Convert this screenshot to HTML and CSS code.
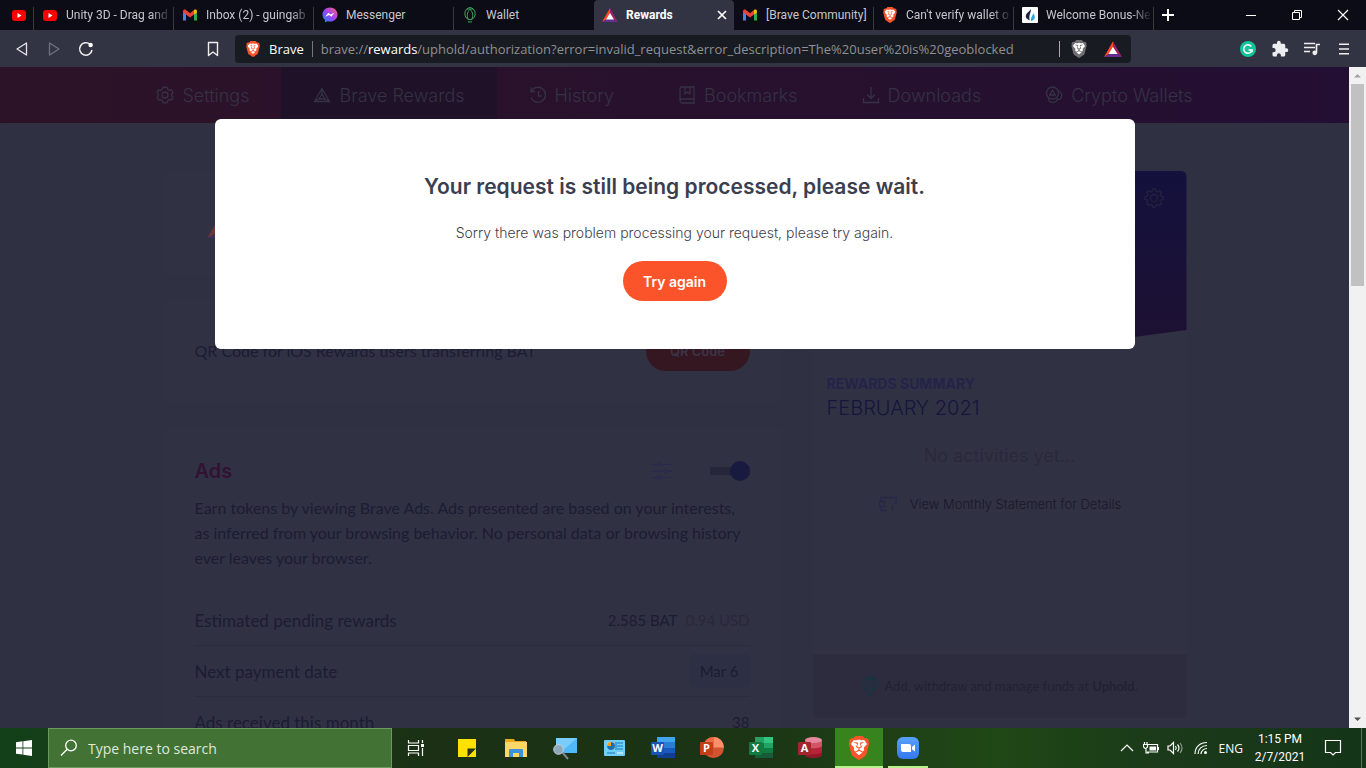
FILE: index.html
```html
<!DOCTYPE html>
<html lang="en">
<head>
<meta charset="utf-8">
<title>Rewards</title>
<link rel="stylesheet" href="styles.css">
</head>
<body>
<svg class="defs" aria-hidden="true">
  <defs>
    <linearGradient id="msg" x1="0" y1="1" x2="1" y2="0"><stop offset="0" stop-color="#0a8cff"/><stop offset=".5" stop-color="#a040f8"/><stop offset="1" stop-color="#ff6070"/></linearGradient>
    <linearGradient id="zm" x1="0" y1="0" x2="0" y2="1"><stop offset="0" stop-color="#58a0ff"/><stop offset="1" stop-color="#3478f0"/></linearGradient>
    <symbol id="yt" viewBox="0 0 16 16"><rect x="1" y="3" width="14" height="11" rx="3" fill="#f00"/><path d="M6.500 6v5l4-2.500z" fill="#fff"/></symbol>
    <symbol id="gmail" viewBox="0 0 16 16"><path d="M1 4.500V13.500h3V7z" fill="#4285f4"/><path d="M15 4.500V13.500h-3V7z" fill="#34a853"/><path d="M1 4.500C1 2.500 3 2 4 3l4 3.200L12 3v4.500l-4 3-4-3L1 5.500z" fill="#ea4335"/><path d="M12 3c1.200-1 3-.5 3 1.500V5.500l-3 2z" fill="#fbbc04"/></symbol>
    <symbol id="brave" viewBox="0 0 24 24"><path d="M4 4l8-2 8 2v8l-3 6-5 3-5-3-3-6z" fill="#fff"/><path fill="currentColor" d="M15.68 0l2.096 2.38s1.84-.512 2.709.358c.868.87 1.584 1.638 1.584 1.638l-.562 1.381.715 2.047s-2.104 7.98-2.35 8.955c-.486 1.919-.818 2.66-2.198 3.633-1.38.972-3.884 2.66-4.293 2.916-.409.256-.92.692-1.38.692-.46 0-.97-.436-1.38-.692a185.796 185.796 0 01-4.293-2.916c-1.38-.973-1.712-1.714-2.197-3.633-.247-.975-2.351-8.955-2.351-8.955l.715-2.047-.562-1.381s.716-.768 1.585-1.638c.868-.87 2.708-.358 2.708-.358L8.321 0h7.36zm-3.679 14.936c-.14 0-1.038.317-1.758.69-.72.373-1.242.637-1.409.742-.167.104-.065.301.087.409.152.107 2.194 1.69 2.393 1.866.198.175.489.464.687.464.198 0 .49-.29.688-.464.198-.175 2.24-1.759 2.392-1.866.152-.108.254-.305.087-.41-.167-.104-.689-.368-1.41-.741-.72-.373-1.617-.69-1.757-.69zm0-11.278s-.409.001-1.022.206-1.278.46-1.584.46c-.307 0-2.581-.434-2.581-.434S4.119 7.152 4.119 7.849c0 .697.339.881.68 1.243l2.02 2.149c.192.203.59.511.356 1.066-.235.555-.58 1.26-.196 1.977.384.716 1.042 1.194 1.464 1.115.421-.08 1.412-.598 1.776-.834.364-.237 1.518-1.19 1.518-1.554 0-.365-1.193-1.02-1.413-1.168-.22-.15-1.226-.725-1.247-.95-.02-.227-.012-.293.284-.851.297-.559.831-1.304.742-1.8-.089-.495-.95-.753-1.565-.986-.615-.232-1.799-.671-1.947-.74-.148-.068-.11-.133.339-.175.448-.043 1.719-.212 2.292-.052.573.16 1.552.403 1.632.532.079.13.149.134.067.579-.081.445-.5 2.581-.541 2.96-.04.38-.12.63.288.724.409.094 1.097.256 1.333.256s.924-.162 1.333-.256c.408-.093.329-.344.288-.723-.04-.38-.46-2.516-.541-2.961-.082-.445-.012-.45.067-.579.08-.129 1.059-.372 1.632-.532.573-.16 1.845.009 2.292.052.449.042.487.107.339.175-.148.069-1.332.508-1.947.74-.615.233-1.476.49-1.565.986-.09.496.445 1.241.742 1.8.297.558.304.624.284.85-.02.226-1.026.802-1.247.95-.22.15-1.413.804-1.413 1.169 0 .364 1.154 1.317 1.518 1.554.364.236 1.355.755 1.776.834.422.079 1.08-.4 1.464-1.115.384-.716.039-1.422-.195-1.977-.235-.555.163-.863.355-1.066l2.02-2.149c.341-.362.68-.546.68-1.243 0-.697-2.695-3.96-2.695-3.96s-2.274.436-2.58.436c-.307 0-.972-.256-1.585-.461-.613-.205-1.022-.206-1.022-.206z"/></symbol>
    <symbol id="bat" viewBox="0 0 16 14"><path d="M8 0L0 14l8-4.600z" fill="#ff4724"/><path d="M8 0l8 14-8-4.600z" fill="#9e1f63"/><path d="M0 14h16l-8-5z" fill="#662d91"/><path d="M8 5l-4 6.500h8z" fill="#fff"/></symbol>
    <symbol id="uphold" viewBox="0 0 16 18"><g fill="none" stroke="currentColor" stroke-width="1.100"><ellipse cx="8" cy="7.500" rx="5.800" ry="6.800"/><path d="M8 2.500C4.500 6 4.300 10 6 14M8 2.500c3.500 3.500 3.700 7.500 2 11.500M4 2.800c2-.8 3-.7 4-.3 1-.4 2-.5 4 .3M5.800 16.800h4.400"/></g></symbol>
  </defs>
</svg>

<header class="browser">
  <div class="tabs">
    <div class="tab pinned"><svg class="fav"><use href="#yt"/></svg></div>
    <div class="tab"><svg class="fav"><use href="#yt"/></svg><span class="title fade">Unity 3D - Drag and</span></div>
    <div class="tab"><svg class="fav"><use href="#gmail"/></svg><span class="title fade">Inbox (2) - guingab</span></div>
    <div class="tab"><svg class="fav" viewBox="0 0 16 16"><path d="M8 .5C3.500.5.500 3.700.500 7.700c0 2.200 1 4 2.500 5.300v2.500l2.300-1.200c4.900 1.300 10.200-1.600 10.200-6.600C15.500 3.700 12.500.5 8 .5z" fill="url(#msg)"/><path d="M3.300 9.800l3-4 2.200 1.800 3.900-1.800-3 4-2.200-1.700z" fill="#fff"/></svg><span class="title">Messenger</span></div>
    <div class="tab last"><svg class="fav green"><use href="#uphold"/></svg><span class="title">Wallet</span></div>
    <div class="tab active"><svg class="fav"><use href="#bat"/></svg><span class="title">Rewards</span><button class="icon-btn" aria-label="Close tab"><svg width="10" height="10" viewBox="0 0 10 10"><path d="M1 1l8 8M9 1L1 9" stroke="#fff" stroke-width="1.700"/></svg></button></div>
    <div class="tab"><svg class="fav"><use href="#gmail"/></svg><span class="title">[Brave Community]</span></div>
    <div class="tab"><svg class="fav brave"><use href="#brave"/></svg><span class="title fade">Can't verify wallet o</span></div>
    <div class="tab"><svg class="fav" viewBox="0 0 16 16"><rect width="16" height="16" rx="1" fill="#fff"/><path d="M8.800 1.500c.8 4-2.200 5-1.200 12C1.500 10.500 4 7 6.300 5 7.800 3.700 8.800 3 8.800 1.500z" fill="#1b2143"/><path d="M11.300 6c.2 2-3 4-2.300 8 5-.8 4.300-5 2.300-8z" fill="#2ba6df"/></svg><span class="title fade">Welcome Bonus-Ne</span></div>
    <button class="icon-btn new-tab" aria-label="New tab"><svg width="12" height="12" viewBox="0 0 12 12"><path d="M6 0v12M0 6h12" stroke="#fff" stroke-width="2"/></svg></button>
    <div class="window-controls">
      <button class="icon-btn" aria-label="Minimize"><svg width="12" height="12" viewBox="0 0 12 12"><path d="M1 6.500h10" stroke="#fff"/></svg></button>
      <button class="icon-btn" aria-label="Restore"><svg width="12" height="12" viewBox="0 0 12 12"><path d="M3.500 3V1.500h7v7H9M1.500 3.500h7v7h-7z" fill="none" stroke="#fff"/></svg></button>
      <button class="icon-btn" aria-label="Close"><svg width="12" height="12" viewBox="0 0 12 12"><path d="M1 1l10 10M11 1L1 11" stroke="#fff" stroke-width="1.200"/></svg></button>
    </div>
  </div>
  <div class="toolbar">
    <div class="tools start">
      <button class="icon-btn" aria-label="Back"><svg width="16" height="16" viewBox="0 0 16 16"><path d="M12.500 2v12L3 8z" fill="none" stroke="#e4e5ea" stroke-width="1.300" stroke-linejoin="round"/></svg></button>
      <button class="icon-btn" aria-label="Forward"><svg width="16" height="16" viewBox="0 0 16 16"><path d="M3.500 2v12L13 8z" fill="none" stroke="#70727f" stroke-width="1.300" stroke-linejoin="round"/></svg></button>
      <button class="icon-btn" aria-label="Reload"><svg width="16" height="16" viewBox="0 0 16 16"><path d="M12 3.300A6.200 6.200 0 1 0 14 9" fill="none" stroke="#eee" stroke-width="1.500"/><circle cx="12.600" cy="4" r="2.200" fill="#fff"/></svg></button>
      <button class="icon-btn bookmark" aria-label="Bookmark this tab"><svg width="14" height="16" viewBox="0 0 14 16"><path d="M2.500 1.500h9v13L7 11l-4.500 3.500z" fill="none" stroke="#eee" stroke-width="1.400" stroke-linejoin="round"/></svg></button>
    </div>
    <div class="omnibox">
      <svg class="site brave" width="16" height="16"><use href="#brave"/></svg>
      <span class="site-name">Brave</span>
      <div class="url" role="textbox" aria-label="Address" contenteditable="true" spellcheck="false">brave://<span class="host">rewards</span>/uphold/authorization?error=invalid_request&amp;error_description=The%20user%20is%20geoblocked</div>
      <span class="divider"></span>
      <button class="icon-btn shield" aria-label="Brave Shields"><svg width="18" height="18"><use href="#brave"/></svg></button>
      <button class="icon-btn" aria-label="Brave Rewards"><svg width="18" height="16"><use href="#bat"/></svg></button>
    </div>
    <div class="tools end">
      <button class="icon-btn" aria-label="Grammarly"><svg width="16" height="16" viewBox="0 0 16 16"><circle cx="8" cy="8" r="8" fill="#15c39a"/><path d="M11.300 5.500A4.200 4.200 0 1 0 12 9H8.500M12 8.500v2.800" fill="none" stroke="#fff" stroke-width="1.500"/></svg></button>
      <button class="icon-btn" aria-label="Extensions"><svg width="18" height="18" viewBox="0 0 24 24"><path d="M20.500 11H19V7a2 2 0 0 0-2-2h-4V3.500a2.500 2.500 0 0 0-5 0V5H4a2 2 0 0 0-2 2v3.800h1.500a2.700 2.700 0 0 1 0 5.400H2V20a2 2 0 0 0 2 2h3.800v-1.500a2.700 2.700 0 0 1 5.400 0V22H17a2 2 0 0 0 2-2v-4h1.500a2.500 2.500 0 0 0 0-5z" fill="#ededf0"/></svg></button>
      <button class="icon-btn" aria-label="Media"><svg width="16" height="14" viewBox="0 0 16 14"><path d="M0 1.500h11M0 5.500h11M0 9.500h6" stroke="#eee" stroke-width="1.500"/><path d="M12.500 10.500V2.500H16" fill="none" stroke="#eee" stroke-width="1.700"/><circle cx="10.800" cy="10.800" r="2.400" fill="#eee"/></svg></button>
      <button class="icon-btn" aria-label="Menu"><svg width="10" height="12" viewBox="0 0 10 12"><path d="M0 1.200h10M0 6h10M0 10.800h10" stroke="#eee" stroke-width="1.600"/></svg></button>
    </div>
  </div>
</header>

<div class="viewport">
  <div class="page">
    <nav class="nav">
      <a href="#settings"><svg viewBox="0 0 18 18"><path d="M9 1l2 .3.700 2 1.900 1.100 2-.4 1.300 2.200L15.700 8v2l1.200 1.600-1.300 2.300-2-.4-1.900 1.100-.7 2L9 17l-2-.4-.7-2-1.900-1.100-2 .4-1.300-2.300L2.300 10V8L1.100 6.200 2.400 4l2 .4 1.900-1.100.7-2z"/><circle cx="9" cy="9" r="3"/></svg>Settings</a>
      <a href="#rewards" class="current"><svg viewBox="0 0 18 18"><path d="M9 2.500L1.500 15.500h15zM9 8l-3 5h6zM9 2.500V8M1.500 15.500L6 13M16.500 15.500L12 13"/></svg>Brave Rewards</a>
      <a href="#history"><svg viewBox="0 0 18 18"><path d="M2.500 5A7.500 7.500 0 1 1 2 11.500M2 1.500V5.500h4M9.500 5v5H13"/></svg>History</a>
      <a href="#bookmarks"><svg viewBox="0 0 18 18"><path d="M4 1h12v16H4a2 2 0 0 1-2-2V3a2 2 0 0 1 2-2zM2 15a2 2 0 0 1 2-2h12M7 1v7l2.500-2L12 8V1"/></svg>Bookmarks</a>
      <a href="#downloads"><svg viewBox="0 0 18 18"><path d="M9 1v11M5 8.500L9 12.500l4-4M1.500 12v4.500h15V12"/></svg>Downloads</a>
      <a href="#wallets"><svg viewBox="0 0 18 18"><circle cx="7.500" cy="7" r="6"/><path d="M7.500 4l-2.700 5h5.400zM13 4.500c4 1.500 5 6 2 8.500-1 .8-2 1-3.500 1M3.500 12c0 6 8 6 9 0"/></svg>Crypto Wallets</a>
    </nav>
    <main class="columns">
      <div class="col-main">
        <section class="card banner"><svg width="34" height="29"><use href="#bat"/></svg></section>
        <section class="card banner qr"><span>QR Code for iOS Rewards users transferring BAT</span><button class="pill dim">QR Code</button></section>
        <section class="card ads">
          <div class="ads-head">
            <h2>Ads</h2>
            <button class="icon-btn sliders" aria-label="Ads settings"><svg width="20" height="20" viewBox="0 0 20 20"><path d="M0 3.500h5M9 3.500h11M0 10h12M16 10h4M0 16.500h5M9 16.500h11"/><circle cx="7" cy="3.500" r="1.800"/><circle cx="14" cy="10" r="1.800"/><circle cx="7" cy="16.500" r="1.800"/></svg></button>
            <input class="switch" type="checkbox" role="switch" aria-label="Ads" checked>
          </div>
          <p class="desc">Earn tokens by viewing Brave Ads. Ads presented are based on your interests, as inferred from your browsing behavior. No personal data or browsing history ever leaves your browser.</p>
          <dl class="rows">
            <div><dt>Estimated pending rewards</dt><dd>2.585 BAT<span class="usd">0.94 USD</span></dd></div>
            <div><dt>Next payment date</dt><dd><span class="chip">Mar 6</span></dd></div>
            <div><dt>Ads received this month</dt><dd>38</dd></div>
          </dl>
        </section>
      </div>
      <aside class="card wallet">
        <div class="wallet-top"><button class="icon-btn" aria-label="Wallet settings"><svg width="20" height="20" viewBox="0 0 20 20"><path d="M8.500 1h3l.4 2.300 1.600.7 2-1.400 2 2-1.400 2 .7 1.600 2.300.4v3l-2.300.4-.7 1.600 1.400 2-2 2-2-1.400-1.600.7-.4 2.200h-3l-.4-2.200-1.600-.7-2 1.400-2-2 1.400-2-.7-1.600L1 11.500v-3l2.200-.4.7-1.600-1.400-2 2-2 2 1.400 1.600-.7z"/><circle cx="10" cy="10" r="3.500"/></svg></button></div>
        <div class="summary">
          <h3>REWARDS SUMMARY</h3>
          <div class="month">FEBRUARY 2021</div>
          <p class="empty">No activities yet…</p>
          <a class="statement" href="#statement"><svg width="20" height="16" viewBox="0 0 20 16"><path d="M3 5V1.500h15V9M3 11v3.500h6M1.500 5.500h5v5h-5zM14.500 9v6"/></svg>View Monthly Statement for Details</a>
        </div>
        <div class="wallet-foot"><svg width="18" height="24"><use href="#uphold"/></svg><span>Add, withdraw and manage funds at <b>Uphold</b>.</span></div>
      </aside>
    </main>
    <div class="dialog" role="dialog" aria-labelledby="dialog-title">
      <h1 id="dialog-title">Your request is still being processed, please wait.</h1>
      <p>Sorry there was problem processing your request, please try again.</p>
      <button class="pill">Try again</button>
    </div>
  </div>
  <div class="scrollbar" aria-hidden="true">
    <svg width="17" height="17" viewBox="0 0 17 17"><path d="M5 10.500h7L8.500 7z" fill="#a3a3a3"/></svg>
    <div class="thumb"></div>
    <svg width="17" height="17" viewBox="0 0 17 17"><path d="M5 6.500h7L8.500 10z" fill="#505050"/></svg>
  </div>
</div>

<footer class="taskbar">
  <button class="icon-btn start-btn" aria-label="Start"><svg width="16" height="16" viewBox="0 0 16 16"><path d="M0 2.200l6.500-.9v6.200H0zM7.300 1.200L16 0v7.500H7.300zM0 8.400h6.500v6.200L0 13.700zM7.300 8.400H16V16l-8.700-1.200z" fill="#fff"/></svg></button>
  <label class="search"><svg width="18" height="18" viewBox="0 0 18 18"><circle cx="11" cy="6.500" r="5.300"/><path d="M7.200 10.300L1 16.500"/></svg><input type="text" placeholder="Type here to search" aria-label="Type here to search"></label>
  <div class="apps">
    <button class="icon-btn task-view" aria-label="Task View"><svg width="24" height="24" viewBox="0 0 24 24"><g fill="none" stroke="#fff" stroke-width="1.200"><path d="M4.500 4v3h10V4M4.500 20v-3h10v3M4.500 9.500h10v5h-10zM18.500 4v3M18.500 12v8"/></g><path d="M17 8h3v3h-3z" fill="#fff"/></svg></button>
    <button class="icon-btn" aria-label="Sticky Notes"><svg width="24" height="24" viewBox="0 0 24 24"><path d="M3 3h18v18H3z" fill="#ffe100"/><path d="M12.500 12.500H21L12.500 21z" fill="#26321a"/></svg></button>
    <button class="icon-btn" aria-label="File Explorer"><svg width="24" height="24" viewBox="0 0 24 24"><path d="M1 3h9l1 2h11v15H1z" fill="#e9a820"/><path d="M1 6h22v15H1z" fill="#ffd766"/><path d="M5 21v-7q0-1 1-1h12q1 0 1 1v7h-4v-4H9v4z" fill="#3b93dc"/></svg></button>
    <button class="icon-btn" aria-label="Remote desktop"><svg width="26" height="24" viewBox="0 0 26 24"><path d="M4 2h21v15H4z" fill="#4fbaf7"/><path d="M4 2h21L8 17H4z" fill="#7accfb"/><path d="M10 16l6 7" stroke="#7d8790" stroke-width="2"/><circle cx="6.500" cy="13.500" r="4.800" fill="#8ba9bb" stroke="#c4d1d8"/></svg></button>
    <button class="icon-btn" aria-label="Control Panel"><svg width="24" height="24" viewBox="0 0 24 24"><rect x="2" y="4" width="21" height="16" rx="1" fill="#70cff8"/><circle cx="9" cy="10" r="4" fill="#fff"/><path d="M9 10V6a4 4 0 1 1-4 4z" fill="#1473b5"/><path d="M9 10V6a4 4 0 0 0-4 4z" fill="#f49c22"/><path d="M15 7h6M15 10h6M15 13h6M14 6v8M5 17h8" stroke="#157ab9"/><path d="M15 17h6" stroke="#fff"/></svg></button>
    <button class="icon-btn" aria-label="Word"><svg width="26" height="24" viewBox="0 0 26 24"><path d="M7 1h18v6H7z" fill="#41a5ee"/><path d="M7 6h18v6H7z" fill="#2b7cd3"/><path d="M7 12h18v5H7z" fill="#185abd"/><path d="M7 17h18v5H7z" fill="#103f91"/><rect x="1" y="6" width="13" height="13" rx="1" fill="#1754b3"/><text x="7.500" y="16">W</text></svg></button>
    <button class="icon-btn" aria-label="PowerPoint"><svg width="26" height="24" viewBox="0 0 26 24"><circle cx="14.500" cy="11.500" r="10.500" fill="#d35230"/><path d="M14.500 1A10.500 10.500 0 0 1 25 11.500H14.500z" fill="#ff8f6b"/><path d="M14.500 1v10.500H4A10.500 10.500 0 0 1 14.500 1z" fill="#ed6c47"/><rect x="1" y="6" width="13" height="13" rx="1" fill="#c43e1c"/><text x="7.500" y="16">P</text></svg></button>
    <button class="icon-btn" aria-label="Excel"><svg width="26" height="24" viewBox="0 0 26 24"><path d="M7 1h18v21H7z" fill="#107c41"/><path d="M7 1h9v6H7z" fill="#21a366"/><path d="M16 1h9v6h-9z" fill="#33c481"/><path d="M16 7h9v5h-9z" fill="#21a366"/><path d="M7 17h18v5H7z" fill="#185c37"/><rect x="1" y="6" width="13" height="13" rx="1" fill="#107c41"/><text x="7.500" y="16">X</text></svg></button>
    <button class="icon-btn" aria-label="Access"><svg width="26" height="24" viewBox="0 0 26 24"><path d="M8 4v15c0 4 17 4 17 0V4z" fill="#94182b"/><path d="M8 4v12c2 3 15 3 17 0V4z" fill="#b52537"/><path d="M8 4v6c2 3 15 3 17 0V4z" fill="#d15567"/><ellipse cx="16.500" cy="4" rx="8.500" ry="3" fill="#e687a0"/><rect x="1" y="6" width="13" height="13" rx="1" fill="#a4262c"/><text x="7.500" y="16">A</text></svg></button>
    <button class="icon-btn running focused brave" aria-label="Brave"><svg width="24" height="24"><use href="#brave"/></svg></button>
    <button class="icon-btn running" aria-label="Zoom"><svg width="24" height="24" viewBox="0 0 24 24"><rect x="1" y="1" width="22" height="22" rx="6" fill="url(#zm)"/><path d="M5 8h8q2 0 2 2v6H7q-2 0-2-2zM16 11l3-2.500v7L16 13.500z" fill="#fff"/></svg></button>
  </div>
  <div class="tray">
    <button class="icon-btn" aria-label="Show hidden icons"><svg width="14" height="14" viewBox="0 0 14 14"><path d="M1 10l6-6 6 6"/></svg></button>
    <button class="icon-btn" aria-label="Battery"><svg width="16" height="14" viewBox="0 0 16 14"><path d="M5 3.500h9.500v7.500H4M3 8v4h3M1.500 1v2M4 1v2M.500 3.500h4v2.500L3 7.500H2L.500 6zM15.500 6v3"/><path d="M6.500 5.500h6.500v4H6.500z" fill="#fff" stroke="none"/></svg></button>
    <button class="icon-btn" aria-label="Volume"><svg width="16" height="14" viewBox="0 0 16 14"><path d="M1 5h2l3.500-3.500v11L3 9H1zM8.500 5q1.500 2 0 4M10.500 3.500q3 3.500 0 7"/><path d="M13 2q4 5 0 10" opacity=".5"/></svg></button>
    <button class="icon-btn wifi" aria-label="Network"><svg width="14" height="14" viewBox="0 0 14 14"><path d="M1 13C1 6 6 1.500 13 1.500M4 13c0-5 4-8.500 9-8.500M7 13c0-3 3-5.500 6-5.500"/><circle cx="11.500" cy="11.500" r="1.500" fill="#fff" stroke="none"/></svg></button>
    <span class="lang">ENG</span>
    <div class="clock"><span>1:15 PM</span><span>2/7/2021</span></div>
    <button class="icon-btn notif" aria-label="Notifications"><svg width="18" height="18" viewBox="0 0 18 18"><path d="M1.500 1.500h15v12h-5L9 16l-2.500-2.500h-5z"/></svg></button>
  </div>
</footer>
</body>
</html>
```
FILE: styles.css
```css
* { box-sizing: border-box; }
body {
  margin: 0;
  height: 100vh;
  display: flex;
  flex-direction: column;
  overflow: hidden;
  background: #2f3041;
  font-family: "Open Sans", "Noto Sans", sans-serif;
}
h1, h2, h3, p, dl, dd { margin: 0; }
button { font: inherit; cursor: pointer; }
svg { flex: none; display: block; }
.defs { position: absolute; width: 0; height: 0; }
.icon-btn {
  display: flex;
  align-items: center;
  justify-content: center;
  flex: none;
  padding: 0;
  border: 0;
  background: none;
}
.brave { color: #fb542b; }

/* Tab strip */
.tabs { display: flex; height: 30px; background: #0b0c16; }
.tab {
  display: flex;
  align-items: center;
  flex: 0 1 140px;
  min-width: 0;
  gap: 8px;
  padding: 0 2px 0 8px;
  color: #c6c7cc;
  font-family: Roboto, "Open Sans", sans-serif;
  font-size: 12px;
  background: linear-gradient(#3a3a3a, #3a3a3a) right bottom / 1px 23px no-repeat;
}
.tab.pinned { flex: none; width: 34px; padding: 0 8px 0 11px; }
.tab.last { background: none; }
.fav { width: 16px; height: 16px; }
.green { color: #3fa85c; }
.title { flex: 1; min-width: 0; white-space: nowrap; }
.fade { -webkit-mask-image: linear-gradient(90deg, #000 80%, transparent); mask-image: linear-gradient(90deg, #000 80%, transparent); }
.tab.active {
  padding-right: 7px;
  background: #323443;
  border-radius: 4px 4px 0 0;
  color: #fff;
  font-weight: 700;
}
.new-tab { width: 28px; }
.window-controls { display: flex; margin-left: auto; }
.window-controls .icon-btn { width: 46px; }

/* Toolbar */
.toolbar { display: flex; align-items: center; height: 37px; background: #323443; }
.tools { display: flex; width: 235px; flex: none; }
.tools .icon-btn { width: 32px; height: 28px; }
.start { padding: 0 6px; }
.end { padding: 0 6px; justify-content: flex-end; }
.bookmark { margin-left: auto; }
.omnibox {
  display: flex;
  align-items: center;
  flex: 1;
  min-width: 0;
  height: 28px;
  padding: 0 9px 0 10px;
  border-radius: 4px;
  background: #181b22;
  font-size: 13px;
  color: #fff;
}
.site { margin-right: 8px; }
.site-name { padding-right: 8px; border-right: 1px solid #777; line-height: 16px; }
.url { flex: 1; min-width: 0; margin-left: 8px; white-space: nowrap; color: #8e9094; outline: 0; }
.host { color: #fff; }
.divider { width: 1px; height: 16px; background: #aaa; }
.shield { margin: 0 16px 0 10px; color: #6f6f73; }

/* Page */
.viewport { display: flex; flex: 1; min-height: 0; }
.page { position: relative; flex: 1; min-width: 0; overflow: hidden; font-family: Lato, "Open Sans", sans-serif; }
.nav {
  display: flex;
  justify-content: center;
  height: 56px;
  background: linear-gradient(90deg, #2d1327, #230f33);
  font-family: Inter, sans-serif;
}
.nav a {
  display: flex;
  align-items: center;
  gap: 8px;
  padding: 0 32px;
  color: #343244;
  font-size: 18px;
  font-weight: 300;
  text-decoration: none;
}
.nav .current { background: #1f1127; }
.nav svg { width: 18px; height: 18px; fill: none; stroke: currentColor; stroke-width: 1.3; }
.columns {
  display: grid;
  grid-template-columns: minmax(0, 619fr) minmax(0, 374fr);
  align-items: start;
  gap: 31px;
  max-width: 1024px;
  margin: 48px auto 0;
}
.col-main { display: grid; gap: 24px; }
.card { border-radius: 6px; background: #313144; color: #1c1c32; }
.banner { display: flex; align-items: center; justify-content: space-between; height: 104px; padding: 0 32px; font-size: 16px; line-height: 24px; }
.banner > svg { margin: 0 12px; opacity: .3; }
.pill {
  min-width: 104px;
  height: 40px;
  padding: 0 20px;
  border: 0;
  border-radius: 20px;
  background: #fb542b;
  color: #fff;
  font-family: Inter, sans-serif;
  font-size: 14px;
  font-weight: 600;
}
.pill.dim { background: #351722; color: #3b3446; font-size: 13px; }
.ads { padding: 32px 32px 0; }
.ads-head { display: flex; align-items: center; height: 24px; margin-bottom: 12px; }
.ads-head h2 { flex: 1; color: #311232; font: 600 20px/24px Inter, sans-serif; }
.sliders { margin-right: 38px; }
.sliders svg { fill: none; stroke: #292950; stroke-width: 1; }
.switch { position: relative; appearance: none; width: 40px; height: 20px; margin: 0; background: linear-gradient(#26263a, #26263a) center / 100% 8px no-repeat; }
.switch::after { content: ""; position: absolute; right: 0; width: 20px; height: 20px; border-radius: 50%; background: #191a40; }
.desc { margin-bottom: 25px; font-size: 16px; line-height: 25px; }
.rows > div { display: flex; align-items: center; justify-content: space-between; height: 51px; border-bottom: 1px solid #2b2c3d; }
.rows dt { font-size: 17px; }
.rows dd { font-size: 15px; }
.usd { margin-left: 8px; color: #28283a; }
.chip { display: block; padding: 0 11px; border-radius: 6px; background: #2d3045; line-height: 34px; }

.wallet { display: flex; flex-direction: column; overflow: hidden; height: 547px; font-family: Inter, sans-serif; }
.wallet-top {
  display: flex;
  justify-content: flex-end;
  align-items: flex-start;
  height: 203px;
  padding: 17px 23px;
  background: linear-gradient(#13113d, #1d1133 160px);
  clip-path: polygon(0 0, 100% 0, 100% 159px, 86% 166px, 60% 175px, 0 175px);
}
.wallet-top svg { fill: none; stroke: #22223f; stroke-width: 1.3; }
.summary { flex: 1; padding: 0 14px; }
.summary h3 { color: #242349; font-size: 14px; line-height: 20px; }
.month { color: #15153d; font-size: 20px; font-weight: 300; line-height: 28px; }
.empty { margin-top: 20px; color: #29293b; font-size: 18px; line-height: 28px; text-align: center; }
.statement { display: flex; align-items: center; justify-content: center; gap: 12px; margin-top: 22px; color: #181826; font-size: 13px; font-weight: 300; line-height: 24px; text-decoration: none; }
.statement svg { fill: none; stroke: #272748; stroke-width: 1.3; }
.wallet-foot { display: flex; align-items: center; justify-content: center; gap: 5px; height: 64px; background: #2c2c3e; color: #212133; font-size: 13px; font-family: Lato, sans-serif; }
.wallet-foot svg { color: #173540; }

.dialog {
  position: absolute;
  top: 52px;
  left: 50%;
  transform: translateX(-50%);
  display: flex;
  flex-direction: column;
  align-items: center;
  width: 920px;
  max-width: 90%;
  padding: 52px 48px 48px;
  border-radius: 6px;
  background: #fff;
  font-family: Inter, sans-serif;
}
.dialog h1 { color: #3b3e4f; font-size: 21px; font-weight: 600; line-height: 32px; }
.dialog p { margin: 18px 0 16px; color: #3f404c; font-size: 14px; font-weight: 300; line-height: 24px; }

.scrollbar { display: flex; flex-direction: column; width: 17px; background: #f1f1f1; }
.thumb { height: 202px; margin: 0 2px auto; background: #c1c1c1; }

/* Taskbar */
.taskbar { display: flex; height: 40px; background: linear-gradient(90deg, #134018, #1b3014 32%, #1b3515 55%, #204716 73%, #1a3a19 85%, #153519); }
.start-btn { width: 48px; }
.search {
  display: flex;
  align-items: center;
  flex: 0 1 344px;
  gap: 10px;
  padding: 0 11px;
  border: 1px solid #6c9a5c;
  background: #437334;
}
.search svg { fill: none; stroke: #fff; stroke-width: 1.3; }
.search input { flex: 1; min-width: 0; padding: 0; border: 0; outline: 0; background: none; color: #e4ece1; font: 14px "Open Sans", sans-serif; }
.search input::placeholder { color: #dfe8dc; opacity: 1; }
.apps { display: flex; gap: 1px; }
.apps .icon-btn { width: 48px; }
.apps .task-view { margin-right: 2px; }
.apps text { fill: #fff; font: 700 11px "Open Sans", sans-serif; text-anchor: middle; }
.running { background: linear-gradient(#b9f08e, #b9f08e) center bottom / 40px 2px no-repeat; }
.focused { background: linear-gradient(#b9f08e, #b9f08e) center bottom / 100% 2px no-repeat #37841f; }
.tray { display: flex; align-items: center; margin-left: auto; border-right: 1px solid #5b7558; margin-right: 4px; color: #fff; font-size: 12px; }
.tray .icon-btn { width: 24px; height: 40px; }
.tray svg { fill: none; stroke: #fff; stroke-width: 1.2; }
.tray .wifi { width: 28px; }
.lang { padding: 0 4px; }
.clock { display: flex; flex-direction: column; align-items: center; width: 50px; margin-left: 8px; font-family: Roboto, sans-serif; line-height: 18px; }
.tray .notif { width: 56px; }
```
